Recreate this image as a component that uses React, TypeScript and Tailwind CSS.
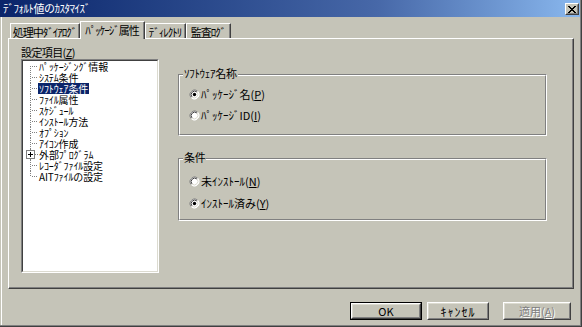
import React from "react";

const CLOSE_PX: [number, number][] = [
  [0, 0], [1, 0], [6, 0], [7, 0],
  [1, 1], [2, 1], [5, 1], [6, 1],
  [2, 2], [3, 2], [4, 2], [5, 2],
  [3, 3], [4, 3],
  [2, 4], [3, 4], [4, 4], [5, 4],
  [1, 5], [2, 5], [5, 5], [6, 5],
  [0, 6], [1, 6], [6, 6], [7, 6],
];

function CloseButton() {
  return (
    <div className="self-start mt-[3px] w-[14px] h-[12px] bg-[#c5c4b8] border border-t-white border-l-white border-r-[#404040] border-b-[#404040]">
      <div className="w-full h-full flex items-center justify-center border border-t-[#c5c4b8] border-l-[#c5c4b8] border-r-[#808080] border-b-[#808080]">
        <svg width="8" height="7" viewBox="0 0 8 7" shapeRendering="crispEdges">
          {CLOSE_PX.map(([x, y], i) => (
            <rect key={i} x={x} y={y} width="1" height="1" fill="#000" />
          ))}
        </svg>
      </div>
    </div>
  );
}

function Radio({ checked }: { checked?: boolean }) {
  return (
    <svg width="11" height="11" viewBox="0 0 11 11" className="shrink-0">
      <circle cx="5.5" cy="5.5" r="4.5" fill="#ffffff" />
      <path d="M2.32 8.68 A4.5 4.5 0 0 1 8.68 2.32" fill="none" stroke="#808080" strokeWidth="1" />
      <path d="M8.68 2.32 A4.5 4.5 0 0 1 2.32 8.68" fill="none" stroke="#ffffff" strokeWidth="1" />
      <path d="M3.03 7.97 A3.5 3.5 0 0 1 7.97 3.03" fill="none" stroke="#404040" strokeWidth="1" />
      <path d="M7.97 3.03 A3.5 3.5 0 0 1 3.03 7.97" fill="none" stroke="#dcdbd0" strokeWidth="1" />
      {checked && <circle cx="5.5" cy="5.5" r="1.7" fill="#000000" />}
    </svg>
  );
}

function RadioRow({
  checked,
  label,
  mnemonic,
}: {
  checked?: boolean;
  label: string;
  mnemonic: string;
}) {
  return (
    <div className="flex items-center h-[13px] gap-[1px]">
      <Radio checked={checked} />
      <span className="text-[11px] leading-[13px] whitespace-nowrap">
        {label}(<span className="underline">{mnemonic}</span>)
      </span>
    </div>
  );
}

type Pos = "first" | "mid" | "last";

function TreeRow({
  label,
  pos,
  selected,
  plus,
}: {
  label: string;
  pos: Pos;
  selected?: boolean;
  plus?: boolean;
}) {
  const y1 = pos === "first" ? 5 : 0;
  const y2 = pos === "last" ? 6 : 11;
  return (
    <div className="flex h-[11px] items-center">
      <svg width="15" height="11" viewBox="0 0 15 11" className="shrink-0" shapeRendering="crispEdges">
        <line x1="7.5" y1={y1} x2="7.5" y2={y2} stroke="#808080" strokeWidth="1" strokeDasharray="1 1" />
        <line x1={plus ? 12 : 9} y1="5.5" x2="15" y2="5.5" stroke="#808080" strokeWidth="1" strokeDasharray="1 1" />
        {plus && (
          <g>
            <rect x="3.5" y="1.5" width="8" height="8" fill="#ffffff" stroke="#808080" strokeWidth="1" />
            <line x1="5" y1="5.5" x2="10" y2="5.5" stroke="#000" strokeWidth="1" />
            <line x1="7.5" y1="3" x2="7.5" y2="8" stroke="#000" strokeWidth="1" />
          </g>
        )}
      </svg>
      <span
        className={
          selected
            ? "bg-[#0a246a] text-white px-px h-[11px] leading-[11px] text-[10px] tracking-[-0.1px] whitespace-nowrap"
            : "px-px h-[11px] leading-[11px] text-[10px] tracking-[-0.1px] whitespace-nowrap"
        }
      >
        {label}
      </span>
    </div>
  );
}

function Btn({
  children,
  className,
  def,
}: {
  children: React.ReactNode;
  className: string;
  def?: boolean;
}) {
  return (
    <div className={className + (def ? " border border-black" : "")}>
      <div className="w-full h-full border border-t-white border-l-white border-r-[#404040] border-b-[#404040]">
        <div className="w-full h-full flex items-center justify-center border border-t-[#dcdbd0] border-l-[#dcdbd0] border-r-[#808080] border-b-[#808080]">
          {children}
        </div>
      </div>
    </div>
  );
}

function GroupBox({
  title,
  className,
  children,
}: {
  title: string;
  className: string;
  children: React.ReactNode;
}) {
  return (
    <div
      className={
        "relative border border-t-[#808080] border-l-[#808080] border-r-white border-b-white " +
        className
      }
    >
      <div className="w-full h-full border border-t-white border-l-white border-r-[#808080] border-b-[#808080]">
        {children}
      </div>
      <span className="absolute left-[4px] top-[-8px] px-px bg-[#c5c4b8] text-[11px] leading-[13px] tracking-[-0.3px] whitespace-nowrap">
        {title}
      </span>
    </div>
  );
}

const TREE: { label: string; selected?: boolean; plus?: boolean }[] = [
  { label: "ﾊﾟｯｹｰｼﾞﾝｸﾞ情報" },
  { label: "ｼｽﾃﾑ条件" },
  { label: "ｿﾌﾄｳｪｱ条件", selected: true },
  { label: "ﾌｧｲﾙ属性" },
  { label: "ｽｹｼﾞｭｰﾙ" },
  { label: "ｲﾝｽﾄｰﾙ方法" },
  { label: "ｵﾌﾟｼｮﾝ" },
  { label: "ｱｲｺﾝ作成" },
  { label: "外部ﾌﾟﾛｸﾞﾗﾑ", plus: true },
  { label: "ﾚｺｰﾀﾞﾌｧｲﾙ設定" },
  { label: "AITﾌｧｲﾙの設定" },
];

export default function App() {
  return (
    <div className="font-['Noto_Sans_CJK_JP','Noto_Sans_CJK_SC',sans-serif] w-[582px] h-[327px] bg-[#c5c4b8] text-black overflow-hidden">
      <div className="w-full h-full border-r border-b border-r-[#404040] border-b-[#404040]">
        <div className="w-full h-full flex flex-col border-r border-b border-r-[#808080] border-b-[#808080]">
          {/* Title bar */}
          <div className="h-[17px] shrink-0 flex justify-between bg-linear-to-r from-[#0a246a] via-[#4768a8] via-65% to-[#8ab8ee] pl-[3px] pr-[1px]">
            <span className="text-white text-[11px] leading-[17px] tracking-[-0.5px] whitespace-nowrap">
              ﾃﾞﾌｫﾙﾄ値のｶｽﾀﾏｲｽﾞ
            </span>
            <CloseButton />
          </div>

          {/* Body */}
          <div className="flex-1 flex flex-col ml-px border-l border-l-white">
            {/* Tabs */}
            <div className="h-[21px] shrink-0 flex items-end pl-[8px]">
              <div className="w-[70px] h-[15px] border-t border-l border-t-white border-l-white border-r border-r-[#404040]">
                <div className="w-full h-full flex items-center justify-center pt-[2px] border-r border-r-[#808080] text-[11px] leading-[13px] tracking-[-1px] whitespace-nowrap">
                  処理中ﾀﾞｲｱﾛｸﾞ
                </div>
              </div>
              <div className="relative z-10 -mb-px w-[65px] h-[18px] bg-[#c5c4b8] border-t border-l border-t-white border-l-white border-r border-r-[#404040]">
                <div className="w-full h-full flex items-center justify-center border-r border-r-[#808080] text-[11px] leading-[13px] tracking-[-1px] whitespace-nowrap">
                  ﾊﾟｯｹｰｼﾞ属性
                </div>
              </div>
              <div className="w-[41px] h-[15px] border-t border-l border-t-white border-l-white border-r border-r-[#404040]">
                <div className="w-full h-full flex items-center justify-center pt-[2px] border-r border-r-[#808080] text-[11px] leading-[13px] tracking-[-1px] whitespace-nowrap">
                  ﾃﾞｨﾚｸﾄﾘ
                </div>
              </div>
              <div className="w-[45px] h-[15px] border-t border-l border-t-white border-l-white border-r border-r-[#404040]">
                <div className="w-full h-full flex items-center justify-center pt-[2px] border-r border-r-[#808080] text-[11px] leading-[13px] tracking-[-1px] whitespace-nowrap">
                  監査ﾛｸﾞ
                </div>
              </div>
            </div>

            {/* Tab panel */}
            <div className="ml-[6px] w-[566px] h-[251px] shrink-0 flex border-t border-l border-t-white border-l-white border-r border-b border-r-[#404040] border-b-[#404040]">
              <div className="flex-1 flex border-r border-b border-r-[#808080] border-b-[#808080]">
                {/* Left column */}
                <div className="ml-[12px] pt-[7px] w-[138px] flex flex-col">
                  <div className="h-[13px] text-[11px] leading-[13px] tracking-[-0.6px] whitespace-nowrap">
                    設定項目(<span className="underline">Z</span>)
                  </div>
                  <div className="h-[214px] border border-t-[#808080] border-l-[#808080] border-r-white border-b-white">
                    <div className="w-full h-full bg-white border border-t-[#404040] border-l-[#404040] border-r-[#dcdbd0] border-b-[#dcdbd0]">
                      {TREE.map((t, i) => (
                        <TreeRow
                          key={i}
                          label={t.label}
                          selected={t.selected}
                          plus={t.plus}
                          pos={i === 0 ? "first" : i === TREE.length - 1 ? "last" : "mid"}
                        />
                      ))}
                    </div>
                  </div>
                </div>

                {/* Right column */}
                <div className="ml-[19px] pt-[35px] w-[369px] flex flex-col">
                  <GroupBox title="ｿﾌﾄｳｪｱ名称" className="h-[62px]">
                    <div className="pt-[12px] pl-[9px] flex flex-col gap-[8px]">
                      <RadioRow checked label="ﾊﾟｯｹｰｼﾞ名" mnemonic="P" />
                      <RadioRow label="ﾊﾟｯｹｰｼﾞID" mnemonic="I" />
                    </div>
                  </GroupBox>
                  <GroupBox title="条件" className="h-[63px] mt-[22px]">
                    <div className="pt-[15px] pl-[9px] flex flex-col gap-[9px]">
                      <RadioRow label="未ｲﾝｽﾄｰﾙ" mnemonic="N" />
                      <RadioRow checked label="ｲﾝｽﾄｰﾙ済み" mnemonic="Y" />
                    </div>
                  </GroupBox>
                </div>
              </div>
            </div>

            {/* Buttons */}
            <div className="mt-[13px] h-[18px] shrink-0 flex justify-end pr-[9px]">
              <Btn className="w-[72px] h-[18px]" def>
                <span className="text-[11px] leading-[13px]">OK</span>
              </Btn>
              <Btn className="ml-[5px] w-[62px] h-[18px]">
                <span className="text-[12px] leading-[13px] tracking-[1px]">ｷｬﾝｾﾙ</span>
              </Btn>
              <Btn className="ml-[14px] w-[68px] h-[18px]">
                <span className="text-[11px] leading-[13px] text-[#808080] [text-shadow:1px_1px_0_#ffffff]">
                  適用(<span className="underline">A</span>)
                </span>
              </Btn>
            </div>
          </div>
        </div>
      </div>
    </div>
  );
}
